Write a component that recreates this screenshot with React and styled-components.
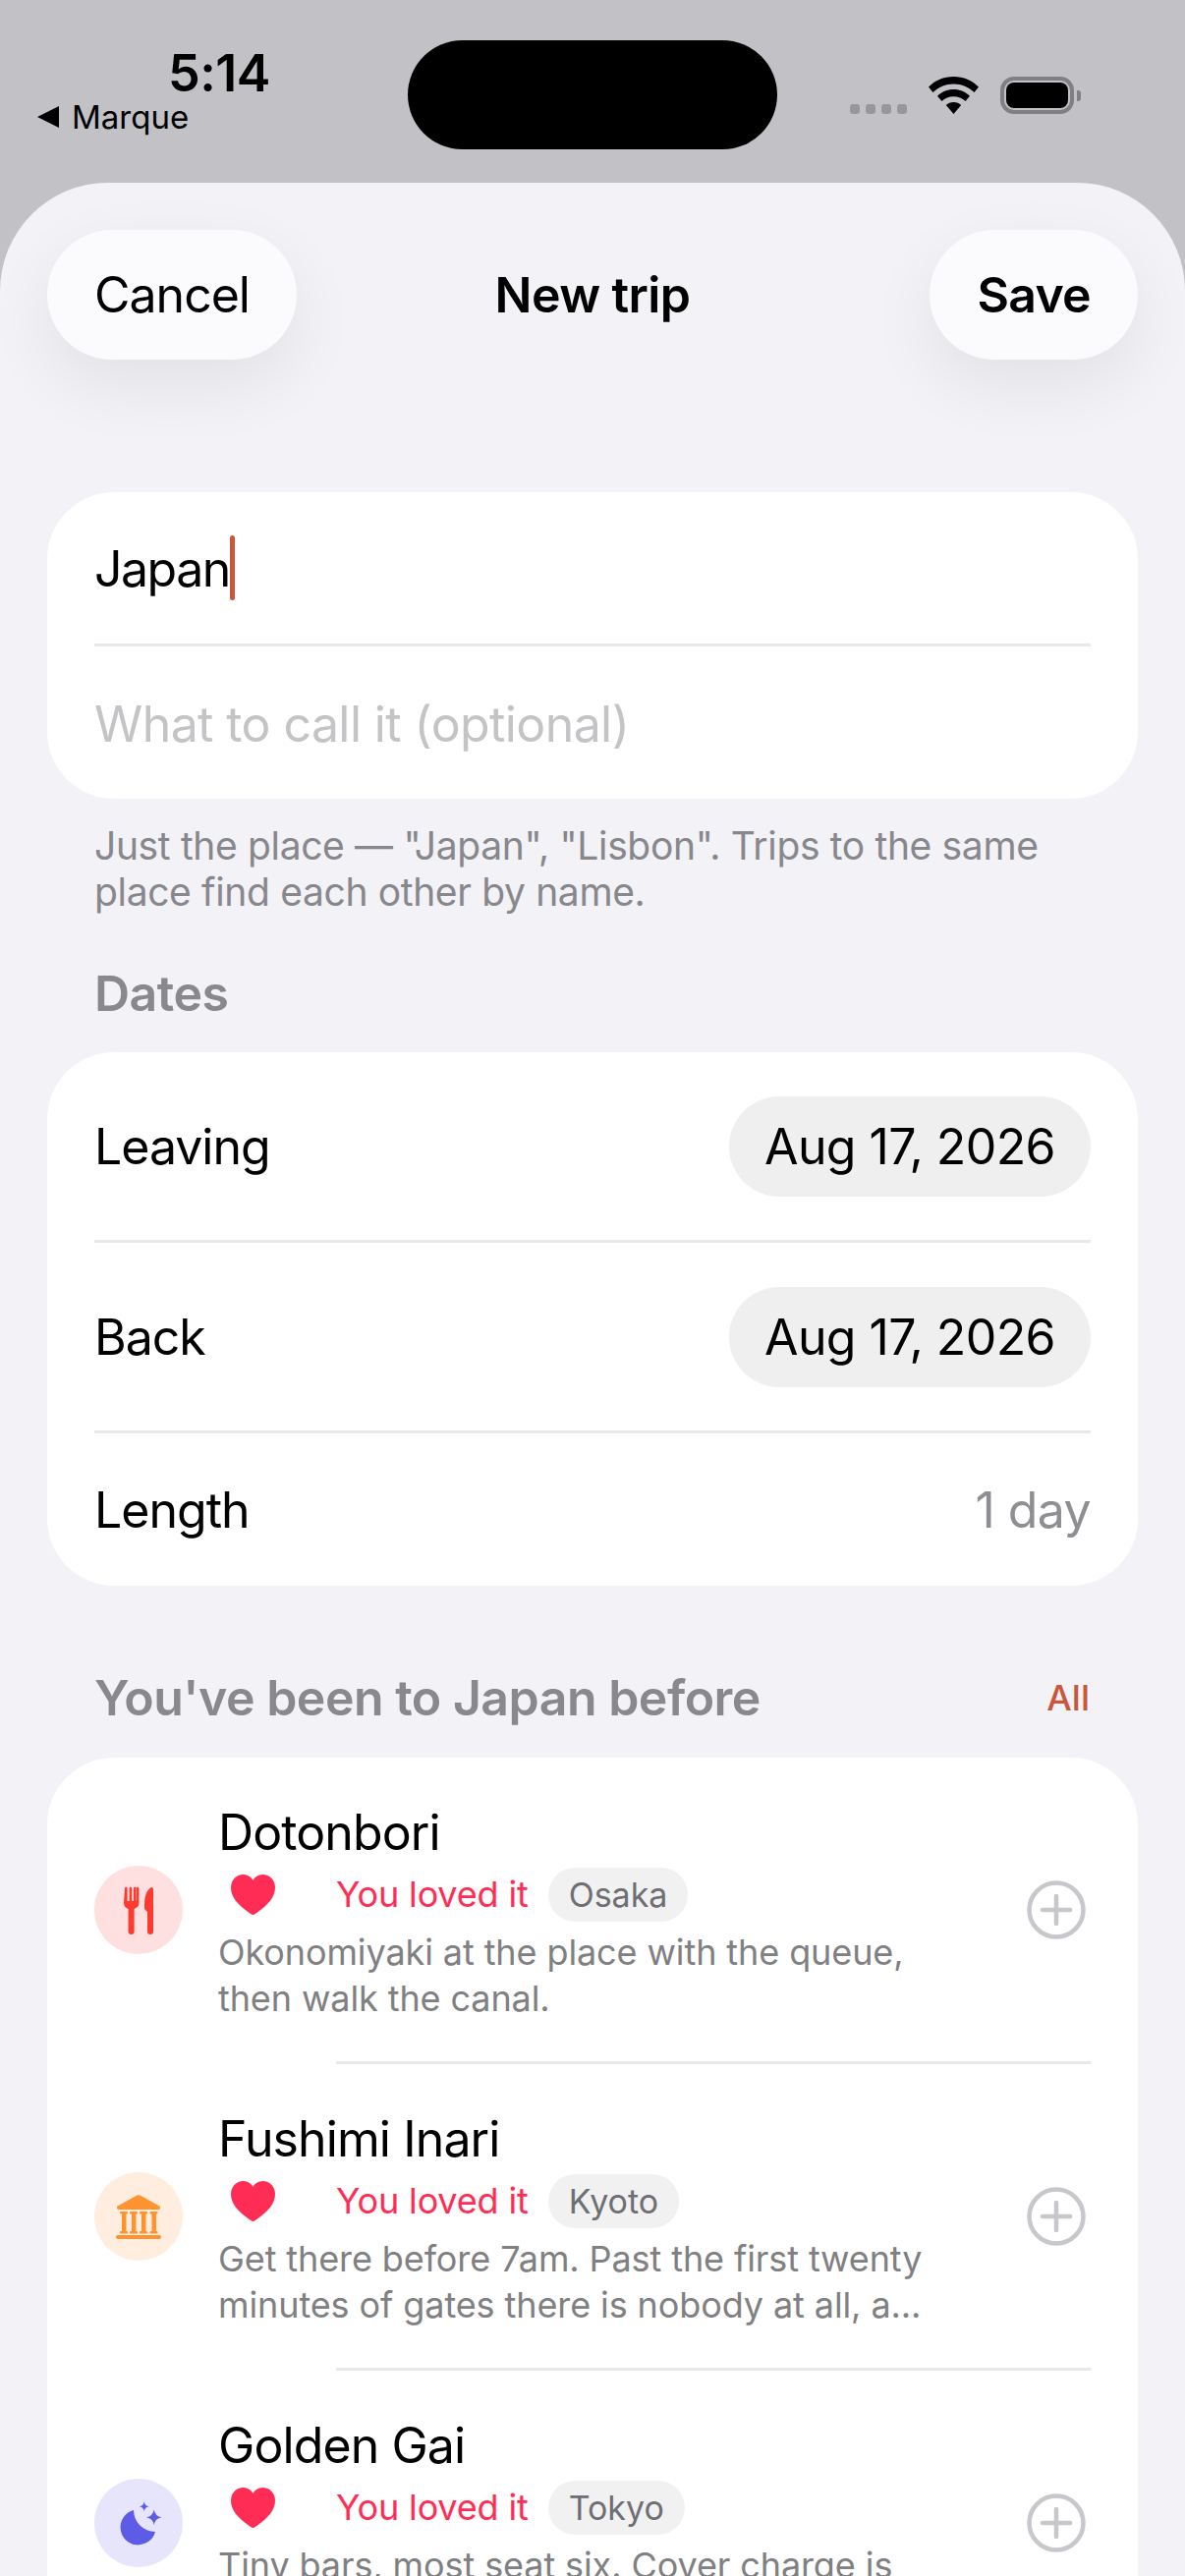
import React from "react";
import styled, { createGlobalStyle } from "styled-components";

const Global = createGlobalStyle`
  html, body {
    margin: 0;
    padding: 0;
    background: #c2c1c6;
  }
  * {
    box-sizing: border-box;
  }
`;

const Screen = styled.div`
  width: 1206px;
  height: 2622px;
  overflow: hidden;
  background: #c2c1c6;
  font-family: Inter, "Liberation Sans", sans-serif;
  color: #000;
`;

/* status bar */
const StatusBar = styled.div`
  height: 186px;
  display: grid;
  grid-template-columns: 415px 376px 1fr;
`;

const StatusLeft = styled.div`
  display: flex;
  flex-direction: column;
  padding: 48px 0 0 38px;
`;

const Time = styled.div`
  font-size: 52px;
  line-height: 54px;
  font-weight: 600;
  margin-left: 133px;
  letter-spacing: -0.5px;
`;

const BackLink = styled.div`
  display: flex;
  align-items: center;
  gap: 13px;
  margin-top: -1px;
  font-size: 33px;
  line-height: 36px;
`;

const BackArrow = styled.span`
  width: 0;
  height: 0;
  border-top: 11px solid transparent;
  border-bottom: 11px solid transparent;
  border-right: 22px solid #000;
`;

const Island = styled.div`
  margin-top: 41px;
  height: 111px;
  border-radius: 56px;
  background: #000;
`;

const StatusRight = styled.div`
  display: flex;
  align-items: flex-start;
  padding: 78px 0 0 74px;
`;

const Dots = styled.div`
  display: flex;
  gap: 6px;
  margin-top: 28px;
  margin-right: 22px;
`;

const Dot = styled.span`
  width: 10px;
  height: 10px;
  border-radius: 3px;
  background: #98989b;
`;

const Battery = styled.div`
  width: 75px;
  height: 38px;
  margin-left: 22px;
  border: 4px solid #808084;
  border-radius: 14px;
  padding: 2px;
  position: relative;
  &::after {
    content: "";
    position: absolute;
    right: -11px;
    top: 10px;
    width: 4px;
    height: 11px;
    border-radius: 0 3px 3px 0;
    background: #808084;
  }
`;

const BatteryFill = styled.div`
  width: 100%;
  height: 100%;
  border-radius: 8px;
  background: #000;
`;

/* sheet */
const Sheet = styled.div`
  height: 2436px;
  padding: 48px 48px 0;
  background: #f2f2f7;
  border-radius: 110px 110px 0 0;
`;

const Nav = styled.div`
  display: grid;
  grid-template-columns: 1fr auto 1fr;
  align-items: center;
`;

const NavButton = styled.div`
  justify-self: ${(props) => (props.$end ? "end" : "start")};
  height: 132px;
  padding: 0 48px;
  border-radius: 66px;
  display: flex;
  align-items: center;
  background: #fbfbfe;
  font-size: 50px;
  font-weight: ${(props) => (props.$bold ? 600 : 400)};
  letter-spacing: ${(props) => (props.$bold ? "-0.7px" : "-1px")};
  box-shadow: 0 26px 70px rgba(0, 0, 0, 0.07);
`;

const NavTitle = styled.div`
  font-size: 50px;
  font-weight: 600;
  letter-spacing: -0.6px;
`;

const Card = styled.div`
  background: #fff;
  border-radius: 68px;
  margin-top: ${(props) => props.$top || 0}px;
`;

const Divider = styled.div`
  height: 3px;
  margin-left: ${(props) => props.$left || 48}px;
  margin-right: 48px;
  background: #e9e9eb;
`;

const FieldRow = styled.div`
  height: ${(props) => props.$height}px;
  padding: 2px 48px 0;
  display: flex;
  align-items: center;
  font-size: 50px;
  letter-spacing: ${(props) => (props.$muted ? "-0.6px" : "-1.5px")};
  color: ${(props) => (props.$muted ? "#c4c4c6" : "#000")};
`;

const Caret = styled.span`
  flex: none;
  width: 5px;
  height: 66px;
  margin-top: -2px;
  border-radius: 3px;
  background: #c9583a;
`;

const Hint = styled.div`
  margin: 24px 48px 0;
  font-size: 39px;
  line-height: 47px;
  letter-spacing: -0.35px;
  color: #87878c;
`;

const SectionRow = styled.div`
  display: flex;
  justify-content: space-between;
  align-items: center;
  padding: 0 48px;
  margin-top: ${(props) => props.$top}px;
`;

const SectionTitle = styled.div`
  font-size: 50px;
  line-height: 56px;
  font-weight: 600;
  letter-spacing: -0.5px;
  color: #88888d;
`;

const AllLink = styled.div`
  font-size: 36px;
  font-weight: 500;
  margin-right: 1px;
  color: #c9583a;
`;

const DateRow = styled.div`
  height: ${(props) => props.$height}px;
  padding: 0 48px;
  display: flex;
  justify-content: space-between;
  align-items: center;
  font-size: 50px;
  letter-spacing: -1px;
`;

const DatePill = styled.div`
  width: 368px;
  height: 102px;
  border-radius: 51px;
  display: flex;
  align-items: center;
  justify-content: center;
  background: #efefef;
  letter-spacing: -0.6px;
`;

const DayCount = styled.div`
  letter-spacing: -0.6px;
  color: #8e8e93;
`;

const PlaceRow = styled.div`
  height: 309px;
  padding: 46px 48px 0;
  display: grid;
  grid-template-columns: 90px 1fr 60px;
  column-gap: 36px;
`;

const Badge = styled.div`
  align-self: center;
  margin-top: -46px;
  width: 90px;
  height: 90px;
  border-radius: 50%;
  background: ${(props) => props.$bg};
  svg {
    display: block;
  }
`;

const PlaceBody = styled.div`
  min-width: 0;
`;

const PlaceName = styled.div`
  font-size: 50px;
  line-height: 60px;
  letter-spacing: -0.9px;
`;

const Meta = styled.div`
  display: flex;
  align-items: center;
  height: 60px;
  margin-top: 3px;
`;

const Heart = styled.svg`
  width: 45px;
  height: 41px;
  margin: 0 62px 0 13px;
  flex: none;
`;

const Loved = styled.span`
  font-size: 36px;
  letter-spacing: -0.15px;
  color: #ff2d55;
`;

const Chip = styled.span`
  margin-left: 20px;
  height: 55px;
  padding: 0 21px;
  border-radius: 28px;
  display: flex;
  align-items: center;
  font-size: 34px;
  color: #6e6e73;
  background: #f1f1f2;
`;

const Note = styled.div`
  margin-top: 6px;
  font-size: 36px;
  line-height: 47px;
  letter-spacing: -0.1px;
  color: #808082;
`;

const NoteLine = styled.div`
  white-space: nowrap;
`;

const AddIcon = styled.svg`
  align-self: center;
  margin: -46px 5px 0 -5px;
  width: 60px;
  height: 60px;
`;

const ForkKnife = () => (
  <svg width="90" height="90" viewBox="0 0 90 90" fill="#ff3b30">
    <path d="M31 23a1.200 1.200 0 0 1 2.600 0v13h2V23a1.200 1.200 0 0 1 2.600 0v13h1.800V23a1.200 1.200 0 0 1 2.600 0v13h0.400V23a1.200 1.200 0 0 1 2.400 0v15c0 3-1.800 5-4.800 6v23a3 3 0 0 1-6 0V44c-3-1-4.600-3-4.600-6z" />
    <path d="M58 22c-4 2-7 8-7 18v4l3 3v20a3 3 0 0 0 6 0V24a2 2 0 0 0-2-2z" />
  </svg>
);

const Columns = () => (
  <svg width="90" height="90" viewBox="0 0 90 90" fill="#ff9330">
    <path d="M43.500 23.600a3 3 0 0 1 3 0L65.500 34a2 2 0 0 1-1 4h-39a2 2 0 0 1-1-4z" />
    {[26, 36, 46, 56.5].map((x) => (
      <React.Fragment key={x}>
        <rect x={x} y="40" width="8" height="2.500" rx="1" />
        <rect x={x + 2} y="41" width="4.500" height="20" />
        <rect x={x} y="60" width="8" height="2.500" rx="1" />
      </React.Fragment>
    ))}
    <rect x="22" y="64" width="46" height="4" rx="2" />
  </svg>
);

const MoonStars = () => (
  <svg width="90" height="90" viewBox="0 0 90 90" fill="#5e5ce6">
    <path d="M40 32A18 18 0 1 0 62 54A22 22 0 0 1 40 32Z" />
    <path d="M60.700 31.500Q61.800 38.200 68.500 39.300Q61.800 40.400 60.700 47Q59.600 40.400 52.900 39.300Q59.600 38.200 60.700 31.500Z" />
    <path d="M50.700 23.300Q51.400 27.600 55.700 28.300Q51.400 29 50.700 33.300Q50 29 45.700 28.300Q50 27.600 50.700 23.300Z" />
  </svg>
);

const places = [
  {
    name: "Dotonbori",
    city: "Osaka",
    bg: "#ffe0e0",
    icon: <ForkKnife />,
    note: ["Okonomiyaki at the place with the queue,", "then walk the canal."],
  },
  {
    name: "Fushimi Inari",
    city: "Kyoto",
    bg: "#ffeee0",
    icon: <Columns />,
    note: ["Get there before 7am. Past the first twenty", "minutes of gates there is nobody at all, a..."],
  },
  {
    name: "Golden Gai",
    city: "Tokyo",
    bg: "#e6e5fb",
    icon: <MoonStars />,
    note: ["Tiny bars, most seat six. Cover charge is"],
  },
];

const Place = ({ place }) => (
  <PlaceRow>
    <Badge $bg={place.bg}>{place.icon}</Badge>
    <PlaceBody>
      <PlaceName>{place.name}</PlaceName>
      <Meta>
        <Heart viewBox="0 0 45 41">
          <path
            fill="#ff2d55"
            d="M22.500 41C21.500 41 20 40 17 37.800C7 30.500 0 23 0 13.300C0 5.500 5.500 0 12.500 0C16.800 0 20.300 2.200 22.500 5.800C24.700 2.200 28.200 0 32.500 0C39.500 0 45 5.500 45 13.300C45 23 38 30.500 28 37.800C25 40 23.500 41 22.500 41Z"
          />
        </Heart>
        <Loved>You loved it</Loved>
        <Chip>{place.city}</Chip>
      </Meta>
      <Note>
        {place.note.map((line) => (
          <NoteLine key={line}>{line}</NoteLine>
        ))}
      </Note>
    </PlaceBody>
    <AddIcon viewBox="0 0 60 60" fill="none" stroke="#c7c7cc" strokeWidth="4.500" strokeLinecap="round">
      <circle cx="30" cy="30" r="27.500" />
      <path d="M30 16v28M16 30h28" />
    </AddIcon>
  </PlaceRow>
);

export default function App() {
  return (
    <Screen>
      <Global />
      <StatusBar>
        <StatusLeft>
          <Time>5:14</Time>
          <BackLink>
            <BackArrow />
            Marque
          </BackLink>
        </StatusLeft>
        <Island />
        <StatusRight>
          <Dots>
            <Dot />
            <Dot />
            <Dot />
            <Dot />
          </Dots>
          <svg width="51" height="38" viewBox="0 0 51 38">
            <path d="M25.500 0C35.500 0 44.500 4 51 10.500L46.500 16C41 10.800 33.600 7.500 25.500 7.500C17.400 7.500 10 10.800 4.500 16L0 10.500C6.500 4 15.500 0 25.500 0Z" />
            <path d="M25.500 13C32 13 37.800 15.600 42 19.800L37.500 25C34.400 22 30.200 20.200 25.500 20.200C20.800 20.200 16.600 22 13.500 25L9 19.800C13.200 15.600 19 13 25.500 13Z" />
            <path d="M25.500 26C28.500 26 31.200 27.100 33.200 29L25.500 38L17.800 29C19.800 27.100 22.500 26 25.500 26Z" />
          </svg>
          <Battery>
            <BatteryFill />
          </Battery>
        </StatusRight>
      </StatusBar>

      <Sheet>
        <Nav>
          <NavButton>Cancel</NavButton>
          <NavTitle>New trip</NavTitle>
          <NavButton $end $bold>
            Save
          </NavButton>
        </Nav>

        <Card $top={135}>
          <FieldRow $height={154}>
            Japan
            <Caret />
          </FieldRow>
          <Divider />
          <FieldRow $height={155} $muted>
            What to call it (optional)
          </FieldRow>
        </Card>
        <Hint>
          Just the place — "Japan", "Lisbon". Trips to the same
          <br />
          place find each other by name.
        </Hint>

        <SectionRow $top={52}>
          <SectionTitle>Dates</SectionTitle>
        </SectionRow>
        <Card $top={32}>
          <DateRow $height={191}>
            Leaving
            <DatePill>Aug 17, 2026</DatePill>
          </DateRow>
          <Divider />
          <DateRow $height={191}>
            Back
            <DatePill>Aug 17, 2026</DatePill>
          </DateRow>
          <Divider />
          <DateRow $height={155}>
            Length
            <DayCount>1 day</DayCount>
          </DateRow>
        </Card>

        <SectionRow $top={86}>
          <SectionTitle>You've been to Japan before</SectionTitle>
          <AllLink>All</AllLink>
        </SectionRow>
        <Card $top={33}>
          {places.map((place, i) => (
            <React.Fragment key={place.name}>
              {i > 0 && <Divider $left={294} />}
              <Place place={place} />
            </React.Fragment>
          ))}
        </Card>
      </Sheet>
    </Screen>
  );
}
